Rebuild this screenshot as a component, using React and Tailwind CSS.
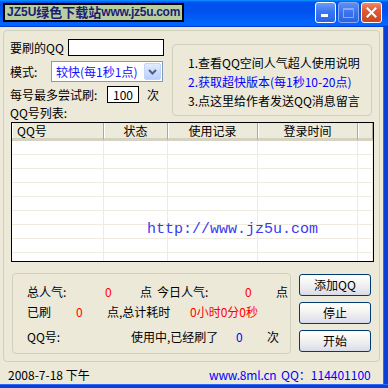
const rows = Array.from({ length: 9 });
const cols = ["QQ号", "状态", "使用记录", "登录时间", ""];

function TitleButton({ kind }) {
  if (kind === "close") {
    return (
      <div className="w-[21px] h-[21px] rounded-[3px] border border-white bg-[linear-gradient(180deg,#f08a6c,#e05a33_40%,#cc4520)] flex items-center justify-center">
        <svg width="11" height="11" viewBox="0 0 11 11">
          <path d="M1.5 1.5 L9.5 9.5 M9.5 1.5 L1.5 9.5" stroke="#fff" strokeWidth="2" strokeLinecap="square" />
        </svg>
      </div>
    );
  }
  if (kind === "max") {
    return (
      <div className="w-[21px] h-[21px] rounded-[3px] border border-[#8aa9f0] bg-[linear-gradient(180deg,#5d8ff5,#3a73ec_50%,#2c63e3)] flex items-center justify-center">
        <div className="w-[11px] h-[10px] border border-[#8aa9f0] border-t-2" />
      </div>
    );
  }
  return (
    <div className="w-[21px] h-[21px] rounded-[3px] border border-white bg-[linear-gradient(180deg,#6a9cf8,#3b78f0_45%,#2a62e4)] flex items-end pl-[5px] pb-[5px]">
      <div className="w-[7px] h-[3px] bg-white" />
    </div>
  );
}

function TitleBar() {
  return (
    <div className="relative h-[27px] shrink-0 bg-[linear-gradient(180deg,#0997ff,#0053ee_8%,#0050ee_40%,#0066ff_88%,#0066ff_93%,#005bff_95%,#003dd7_96%,#003dd7)] flex justify-end items-start pt-[2px] pr-[6px] gap-[2px]">
      <div className="absolute left-[3px] top-[3px] w-[181px] h-[19px] border-2 border-black bg-[#b7cf9f] flex items-center pl-[2px] leading-[15px] font-bold text-[#1c1c74] font-['Liberation_Sans','Noto_Sans_CJK_SC',sans-serif] whitespace-nowrap overflow-hidden">
        <span className="text-[12px]">JZ5U</span>
        <span className="text-[13px]">绿色下载站</span>
        <span className="text-[12px] tracking-[-0.3px]">www.jz5u.com</span>
      </div>
      <TitleButton kind="min" />
      <TitleButton kind="max" />
      <TitleButton kind="close" />
    </div>
  );
}

function XPButton({ children }) {
  return (
    <button className="w-[72px] h-[22px] rounded-[3px] border border-[#003c74] bg-[linear-gradient(180deg,#ffffff,#f6f6f4_35%,#e9e9ee_70%,#d8dbe8)] text-[12px] leading-[14px] text-black">
      {children}
    </button>
  );
}

function TopSection() {
  return (
    <div className="flex h-[91px] shrink-0">
      <div className="w-[168px] pl-[6px] pt-[8px] flex flex-col">
        <div className="flex items-center h-[17px]">
          <span className="w-[58px]">要刷的QQ</span>
          <div className="w-[96px] h-[17px] border border-black bg-white" />
        </div>
        <div className="flex items-center h-[21px] mt-[5px]">
          <span className="w-[41px]">模式:</span>
          <div className="w-[112px] h-[21px] border border-[#7f9db9] bg-white flex items-center pl-[4px] pr-[1px]">
            <span className="flex-1 text-[#1010ff]">较快(每1秒1点)</span>
            <div className="w-[17px] h-[17px] rounded-[2px] border border-[#c3d3fd] bg-[linear-gradient(180deg,#e2ebfe,#b9cffb)] flex items-center justify-center">
              <svg width="9" height="6" viewBox="0 0 9 6">
                <path d="M1 1 L4.5 4.5 L8 1" stroke="#4d6185" strokeWidth="2" fill="none" />
              </svg>
            </div>
          </div>
        </div>
        <div className="flex items-center h-[17px] mt-[4px]">
          <span className="w-[97px]">每号最多尝试刷:</span>
          <div className="w-[32px] h-[17px] border border-black bg-white flex items-center justify-center">100</div>
          <span className="ml-[8px]">次</span>
        </div>
        <div className="flex items-center h-[19px]">QQ号列表:</div>
      </div>
      <div className="mt-[13px] w-[200px] h-[72px] border border-[#d0d0bf] rounded-[4px] pl-[15px] pt-[8px] flex flex-col leading-[19px]">
        <span>1.查看QQ空间人气超人使用说明</span>
        <span className="text-[#0000ff]">2.获取超快版本(每1秒10-20点)</span>
        <span>3.点这里给作者发送QQ消息留言</span>
      </div>
    </div>
  );
}

function Table() {
  return (
    <div className="relative ml-[7px] w-[363px] h-[140px] shrink-0 border border-black bg-white overflow-hidden">
      <div className="grid grid-cols-[92px_64px_90px_100px_15px] h-[18px] bg-[#ebeadb]">
        {cols.map((c, i) => (
          <div
            key={i}
            className={`h-[18px] flex items-center border-r border-b-[3px] border-r-[#aca899] border-b-[#d6d2c2] shadow-[inset_1px_0_0_#ffffff] ${i === 0 ? "pl-[5px]" : "justify-center"}`}
          >
            {c}
          </div>
        ))}
      </div>
      {rows.map((_, r) => (
        <div key={r} className="grid grid-cols-[92px_64px_90px_100px_15px]">
          {cols.map((_, i) => (
            <div key={i} className="h-[14px] border-r border-b border-[#efecdf]" />
          ))}
        </div>
      ))}
      <div className="absolute left-[135px] top-[99px] text-[15px] leading-[16px] text-[#3a3af0] font-['Liberation_Mono',monospace] whitespace-nowrap">
        http://www.jz5u.com
      </div>
    </div>
  );
}

function BottomSection() {
  return (
    <div className="flex items-start mt-[11px] ml-[8px]">
      <div className="w-[279px] h-[81px] border border-[#d0d0bf] rounded-[4px] pl-[14px] pt-[8px] flex flex-col">
        <div className="flex items-center h-[20px]">
          <span className="w-[78px]">总人气:</span>
          <span className="w-[35px] text-[#ff0000]">0</span>
          <span className="w-[17px]">点</span>
          <span className="w-[88px]">今日人气:</span>
          <span className="w-[31px] text-[#ff0000]">0</span>
          <span>点</span>
        </div>
        <div className="flex items-center h-[20px]">
          <span className="w-[49px]">已刷</span>
          <span className="w-[31px] text-[#ff0000]">0</span>
          <span className="w-[83px]">点,总计耗时</span>
          <span className="text-[#ff0000]">0小时0分0秒</span>
        </div>
        <div className="flex items-center h-[20px] mt-[5px]">
          <span className="w-[104px]">QQ号:</span>
          <span className="w-[105px]">使用中,已经刷了</span>
          <span className="w-[31px] text-[#0000ff]">0</span>
          <span>次</span>
        </div>
      </div>
      <div className="ml-[8px] mt-[1px] flex flex-col gap-[6px]">
        <XPButton>添加QQ</XPButton>
        <XPButton>停止</XPButton>
        <XPButton>开始</XPButton>
      </div>
    </div>
  );
}

function StatusBar() {
  return (
    <div className="h-[22px] shrink-0 overflow-hidden flex items-start pl-[8px] pt-[7px] leading-[12px] whitespace-nowrap">
      <span className="w-[201px]">2008-7-18 下午</span>
      <span className="w-[72px] text-[#0000ff] tracking-[-0.2px]">www.8ml.cn</span>
      <span className="text-[#0000ff]">QQ：114401100</span>
    </div>
  );
}

export default function App() {
  return (
    <div className="w-[388px] h-[388px] overflow-hidden flex flex-col bg-[#ece9d8] text-[12px] leading-[14px] text-black font-['Noto_Sans_CJK_SC',sans-serif]">
      <TitleBar />
      <div className="flex flex-1 min-h-0">
        <div className="w-[383px] flex flex-col">
          <div className="ml-[3px] mt-[3px] w-[377px] h-[332px] shrink-0 border border-[#d0d0bf] rounded-[4px] flex flex-col">
            <TopSection />
            <Table />
            <BottomSection />
          </div>
          <StatusBar />
        </div>
        <div className="w-[5px] bg-[#0a3fd8] border-l border-[#2b6cf2]" />
      </div>
      <div className="h-[4px] shrink-0 bg-[#0a3fd8] border-t border-[#2b6cf2]" />
    </div>
  );
}
